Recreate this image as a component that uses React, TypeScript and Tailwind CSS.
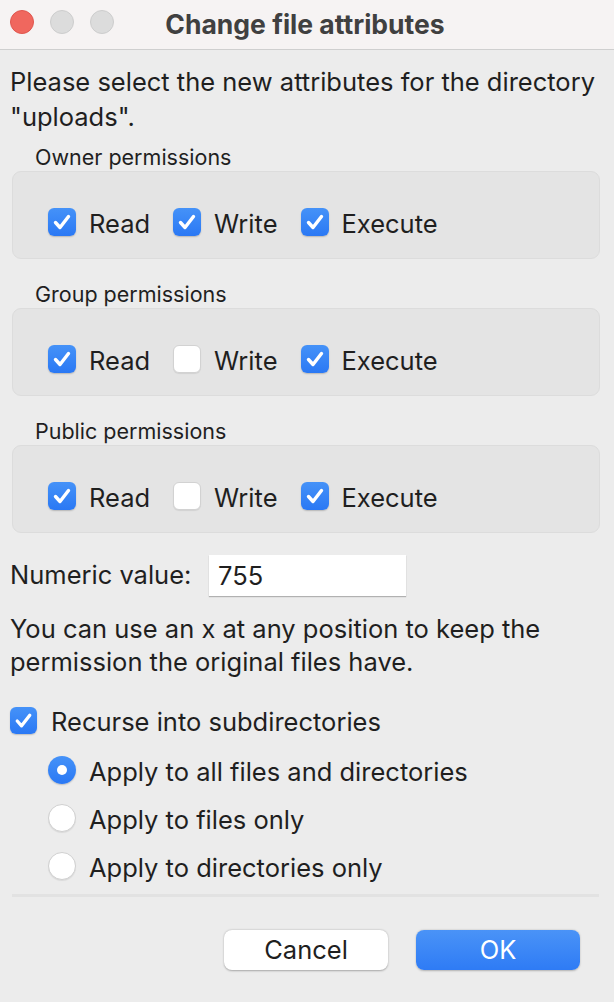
import { useState } from 'react';

type Perm = { read: boolean; write: boolean; execute: boolean };

function CheckMark() {
  return (
    <svg viewBox="0 0 28 28" className="h-full w-full" aria-hidden>
      <path
        d="M7.5 14.5 L12 19.5 L20.5 8.5"
        fill="none"
        stroke="white"
        strokeWidth="3.4"
        strokeLinecap="round"
        strokeLinejoin="round"
      />
    </svg>
  );
}

function Checkbox({ checked, size = 'md' }: { checked: boolean; size?: 'md' | 'sm' }) {
  const dim = size === 'md' ? 'h-[28px] w-[28px]' : 'h-[27px] w-[27px]';
  if (checked) {
    return (
      <span
        className={`${dim} shrink-0 rounded-[6px] bg-gradient-to-b from-[#4592f8] to-[#2a78f4] shadow-[0_1px_1.5px_rgba(0,0,0,0.2)]`}
      >
        <CheckMark />
      </span>
    );
  }
  return (
    <span
      className={`${dim} shrink-0 rounded-[6px] border border-[#d2d2d2] bg-white shadow-[0_1px_1px_rgba(0,0,0,0.08)]`}
    />
  );
}

function Radio({ checked }: { checked: boolean }) {
  if (checked) {
    return (
      <span className="flex h-[28px] w-[28px] shrink-0 items-center justify-center rounded-full bg-gradient-to-b from-[#4592f8] to-[#2a78f4] shadow-[0_1px_1.5px_rgba(0,0,0,0.2)]">
        <span className="h-[10px] w-[10px] rounded-full bg-white" />
      </span>
    );
  }
  return (
    <span className="h-[28px] w-[28px] shrink-0 rounded-full border border-[#d0d0d0] bg-white shadow-[0_1px_1px_rgba(0,0,0,0.08)]" />
  );
}

function PermissionGroup({ title, perm }: { title: string; perm: Perm }) {
  const items: [string, boolean][] = [
    ['Read', perm.read],
    ['Write', perm.write],
    ['Execute', perm.execute],
  ];
  return (
    <div>
      <div className="pl-[25px] text-[21.5px] leading-[24px]">{title}</div>
      <div className="ml-[2px] mr-[4px] mt-[2px] h-[88px] rounded-[9px] border border-[#dcdcdc] bg-[#e4e4e4] pl-[35px] pt-[36px]">
        <div className="flex h-[28px] items-center gap-[23px]">
          {items.map(([label, on]) => (
            <label key={label} className="flex h-[28px] items-center gap-[13px]">
              <Checkbox checked={on} />
              <span className="pt-[4px] text-[25.5px] leading-[24px]">{label}</span>
            </label>
          ))}
        </div>
      </div>
    </div>
  );
}

function TitleBar() {
  return (
    <div className="relative flex h-[50px] shrink-0 items-center justify-center border-b border-[#cfcfcf] bg-[#f6f3f3]">
      <div className="absolute left-[10px] top-[10px] flex gap-[16px]">
        <span className="h-[24px] w-[24px] rounded-full border border-[#e0564e] bg-[#f0675e]" />
        <span className="h-[24px] w-[24px] rounded-full border border-[#cdcdcd] bg-[#dcdcdc]" />
        <span className="h-[24px] w-[24px] rounded-full border border-[#cdcdcd] bg-[#dcdcdc]" />
      </div>
      <span className="pr-[4px] text-[26.5px] font-bold text-[#404040]">Change file attributes</span>
    </div>
  );
}

export default function App() {
  const [mode, setMode] = useState(0);
  const groups: [string, Perm][] = [
    ['Owner permissions', { read: true, write: true, execute: true }],
    ['Group permissions', { read: true, write: false, execute: true }],
    ['Public permissions', { read: true, write: false, execute: true }],
  ];
  const modes = ['Apply to all files and directories', 'Apply to files only', 'Apply to directories only'];

  return (
    <div className="flex h-[1002px] w-[614px] flex-col overflow-hidden bg-[#ececec] font-['Inter',sans-serif] text-[#1f1f1f]">
      <TitleBar />
      <div className="flex flex-col px-[10px]">
        <p className="mt-[14px] text-[25.5px] leading-[35px]">
          Please select the new attributes for the directory "uploads".
        </p>

        <div className="mt-[11px] flex flex-col gap-[23px]">
          {groups.map(([title, perm]) => (
            <PermissionGroup key={title} title={title} perm={perm} />
          ))}
        </div>

        <div className="mt-[22px] flex items-center">
          <span className="w-[199px] text-[25.5px]">Numeric value:</span>
          <div className="flex h-[41px] w-[197px] items-center bg-white pl-[9px] pt-[2px] text-[25.5px] shadow-[0_1px_1px_rgba(0,0,0,0.25)]">
            755
          </div>
        </div>

        <p className="mt-[16px] text-[25.5px] leading-[33px]">
          You can use an x at any position to keep the permission the original files have.
        </p>

        <label className="mt-[28px] flex h-[28px] items-center gap-[14px]">
          <Checkbox checked size="sm" />
          <span className="pt-[4px] text-[25.5px] leading-[24px]">Recurse into subdirectories</span>
        </label>

        <div className="mt-[22px] flex flex-col gap-[20px] pl-[38px]">
          {modes.map((m, i) => (
            <label key={m} className="flex h-[28px] items-center gap-[13px]" onClick={() => setMode(i)}>
              <Radio checked={mode === i} />
              <span className="pt-[4px] text-[25.5px] leading-[24px]">{m}</span>
            </label>
          ))}
        </div>

        <div className="ml-[2px] mr-[5px] mt-[14px] h-[3px] bg-[#e2e2e2]" />

        <div className="mr-[24px] mt-[33px] flex justify-end gap-[28px]">
          <button
            type="button"
            className="h-[40px] w-[164px] rounded-[8px] bg-white text-[25.5px] text-[#1f1f1f] shadow-[0_0.5px_2px_rgba(0,0,0,0.3)]"
          >
            Cancel
          </button>
          <button
            type="button"
            className="h-[40px] w-[164px] rounded-[8px] bg-gradient-to-b from-[#4a93f7] to-[#2e7bf5] text-[25.5px] text-white shadow-[0_0.5px_2px_rgba(0,0,0,0.25)]"
          >
            OK
          </button>
        </div>
      </div>
    </div>
  );
}
